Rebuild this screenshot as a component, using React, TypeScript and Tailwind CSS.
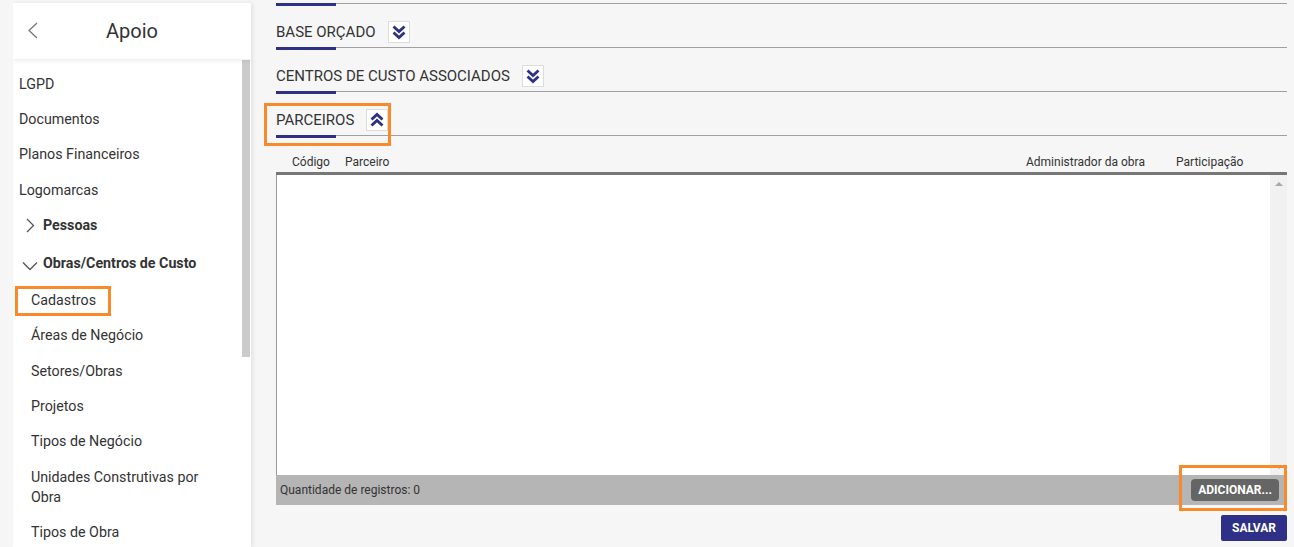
import { ReactNode } from 'react'

const NAVY = '#2e3084'

function DoubleChevron({ up }: { up?: boolean }) {
  return (
    <svg width="16" height="16" viewBox="0 0 16 16" fill="none" stroke={NAVY} strokeWidth="2.8" strokeLinecap="butt" strokeLinejoin="miter"
      style={{ transform: up ? 'rotate(180deg)' : undefined }}>
      <polyline points="2.5,2.5 8,7.5 13.5,2.5" />
      <polyline points="2.5,8.5 8,13.5 13.5,8.5" />
    </svg>
  )
}

function SectionLine() {
  return (
    <div>
      <div className="h-px bg-[#a0a0a0]" />
      <div className="w-[60px] h-[3px] -mt-px bg-[#2e3084]" />
    </div>
  )
}

function Section({ title, up, children }: { title: string; up?: boolean; children?: ReactNode }) {
  return (
    <div className="relative pt-[15px]">
      <div className="flex items-center h-[22px] mb-[4px]">
        <span className="text-[15px] text-[#333]">{title}</span>
        <button className="ml-3 w-[22px] h-[22px] flex items-center justify-center bg-white border border-[#dcdcdc]">
          <DoubleChevron up={up} />
        </button>
      </div>
      <SectionLine />
      {children}
    </div>
  )
}

function NavItem({ label, sub, highlight }: { label: string; sub?: boolean; highlight?: boolean }) {
  return (
    <div className={`relative py-[7.7px] leading-5 text-[14.25px] text-[#333] ${sub ? 'pl-[18px] pr-[36px]' : 'pl-[6px]'}`}>
      {label}
      {highlight && <div className="absolute left-[2px] top-[4px] w-[96px] h-[30px] border-[3px] border-[#f98a2c]" />}
    </div>
  )
}

export default function App() {
  return (
    <div className="flex h-[547px] overflow-hidden bg-[#f6f6f6]" style={{ fontFamily: 'Roboto, "Liberation Sans", sans-serif' }}>
      {/* Sidebar */}
      <aside className="ml-[13px] mt-[3px] w-[238px] shrink-0 bg-white shadow-[2px_0_4px_rgba(0,0,0,0.08)] flex flex-col overflow-hidden">
        <div className="relative h-[56px] shrink-0 flex items-center justify-center shadow-[0_2px_4px_rgba(0,0,0,0.08)] z-10">
          <svg className="absolute left-[14px] top-[19px]" width="12" height="17" viewBox="0 0 12 17" fill="none" stroke="#777" strokeWidth="1.3">
            <polyline points="10,1 2,8.5 10,16" />
          </svg>
          <span className="text-[20px] text-[#333]">Apoio</span>
        </div>
        <div className="flex flex-1 min-h-0">
          <div className="flex-1 pt-[7px]">
            <NavItem label="LGPD" />
            <NavItem label="Documentos" />
            <NavItem label="Planos Financeiros" />
            <NavItem label="Logomarcas" />
            <div className="flex items-center py-[7.7px] leading-5 text-[14.25px] font-bold text-[#333] pl-[12px]">
              <svg width="10" height="15" viewBox="0 0 10 15" fill="none" stroke="#555" strokeWidth="1.3" className="mr-[8px]">
                <polyline points="2,1 8.5,7.5 2,14" />
              </svg>
              Pessoas
            </div>
            <div className="flex items-center py-[9.7px] leading-5 text-[14.25px] font-bold text-[#333] pl-[9px]">
              <svg width="16" height="10" viewBox="0 0 16 10" fill="none" stroke="#555" strokeWidth="1.3" className="mr-[5px] mt-[7px]">
                <polyline points="1,1.5 8,8.5 15,1.5" />
              </svg>
              Obras/Centros de Custo
            </div>
            <NavItem label="Cadastros" sub highlight />
            <NavItem label="Áreas de Negócio" sub />
            <NavItem label="Setores/Obras" sub />
            <NavItem label="Projetos" sub />
            <NavItem label="Tipos de Negócio" sub />
            <NavItem label="Unidades Construtivas por Obra" sub />
            <NavItem label="Tipos de Obra" sub />
          </div>
          <div className="w-[9px] pt-px">
            <div className="h-[297px] w-[8px] bg-[#cbcbcb]" />
          </div>
        </div>
      </aside>

      {/* Main */}
      <main className="flex-1 pl-[25px] pr-[7px] min-w-0">
        <div className="pt-[3px]">
          <SectionLine />
        </div>
        <Section title="BASE ORÇADO" />
        <Section title="CENTROS DE CUSTO ASSOCIADOS" />
        <Section title="PARCEIROS" up>
          <div className="absolute left-[-12px] top-[9px] w-[127px] h-[43px] border-[3px] border-[#f98a2c]" />
        </Section>

        {/* Table */}
        <div className="mt-[17px]">
          <div className="flex pl-[16px] text-[12px] text-[#333] h-[14px] items-center">
            <div className="w-[53px]">Código</div>
            <div className="flex-1">Parceiro</div>
            <div className="w-[150px]">Administrador da obra</div>
            <div className="w-[111px]">Participação</div>
          </div>
          <div className="mt-[3px] h-[3px] bg-[#777]" />
          <div className="flex h-[300px] bg-white border-l border-[#999]">
            <div className="flex-1" />
            <div className="w-[17px] bg-[#f1f1f1] flex flex-col items-center justify-between pt-[7px] pb-[6px]">
              <div className="w-0 h-0 border-l-[4px] border-r-[4px] border-b-[4px] border-l-transparent border-r-transparent border-b-[#a8a8a8]" />
              <div className="w-0 h-0 border-l-[4px] border-r-[4px] border-t-[4px] border-l-transparent border-r-transparent border-t-[#a8a8a8]" />
            </div>
          </div>
          <div className="relative h-[30px] bg-[#b5b5b5] flex items-center justify-between pl-[4px] pr-[8px]">
            <span className="text-[12px] text-[#333]">Quantidade de registros: 0</span>
            <button className="h-[22px] px-[7px] rounded-[4px] bg-[#656565] text-white text-[12px] font-bold">ADICIONAR...</button>
            <div className="absolute right-0 top-[-10px] w-[108px] h-[46px] border-[3px] border-[#f98a2c]" />
          </div>
          <div className="flex justify-end mt-[10px]">
            <button className="h-[26px] w-[66px] rounded-[2px] bg-[#2e3087] text-white text-[12px] font-bold">SALVAR</button>
          </div>
        </div>
      </main>
    </div>
  )
}
